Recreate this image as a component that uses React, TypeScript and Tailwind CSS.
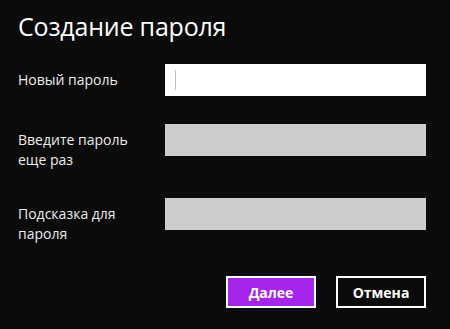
export default function App() {
	const fields = [
		{ label: "Новый пароль", active: true },
		{ label: "Введите пароль еще раз", active: false },
		{ label: "Подсказка для пароля", active: false },
	];

	return (
		<div className="w-[450px] h-[329px] bg-[#0b0b0b] text-white font-['Open_Sans',sans-serif] px-[18px] pt-[8px] overflow-hidden">
			<h1 className="text-[25px] leading-[36px] font-normal tracking-[-0.2px]">Создание пароля</h1>

			<div className="mt-[20px] flex flex-col gap-[28px]">
				{fields.map((f) => (
					<div key={f.label} className="flex items-start">
						<div className="w-[147px] pt-[6px] pr-[10px] text-[14px] leading-[20px] text-[#ececec]">
							{f.label}
						</div>
						<div
							className={
								f.active
									? "w-[261px] h-[32px] bg-white flex items-center pl-[10px]"
									: "w-[261px] h-[32px] bg-[#cccccc]"
							}
						>
							{f.active && <div className="w-px h-[20px] bg-[#c0c0c0]" />}
						</div>
					</div>
				))}
			</div>

			<div className="mt-[32px] flex justify-end gap-[20px] pr-[6px]">
				<button className="w-[90px] h-[32px] border-2 border-white bg-[#a526ea] text-[14px] font-bold">
					Далее
				</button>
				<button className="w-[90px] h-[32px] border-2 border-white bg-[#0b0b0b] text-[14px] font-bold">
					Отмена
				</button>
			</div>
		</div>
	);
}
